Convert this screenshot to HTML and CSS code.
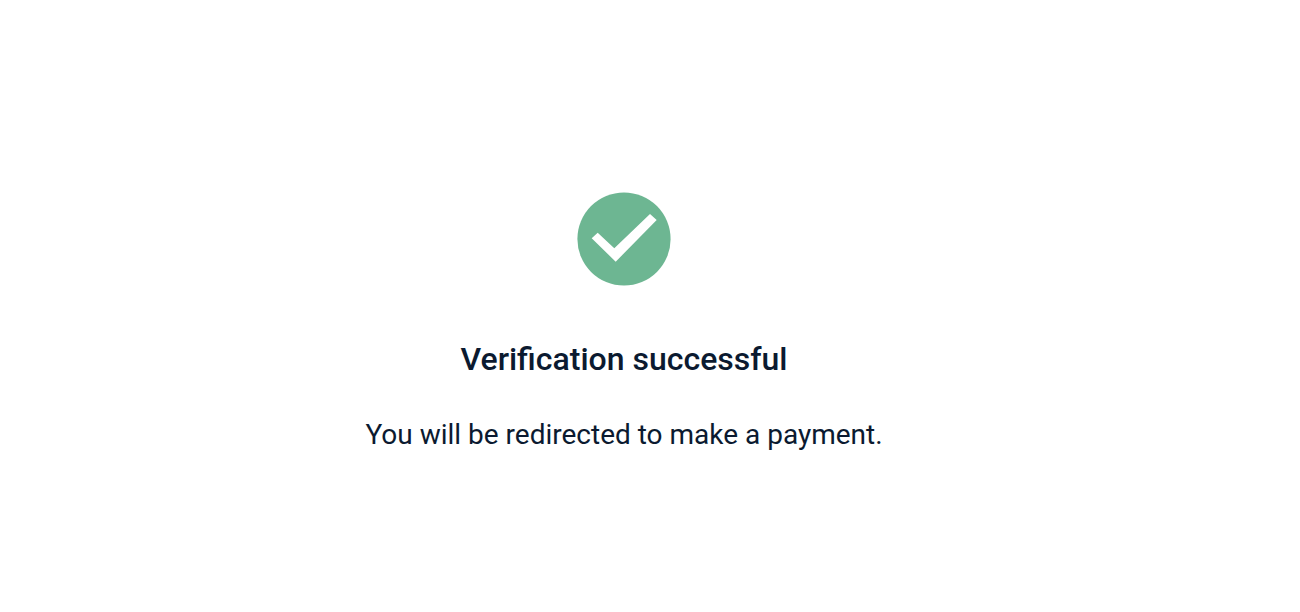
FILE: index.html
```html
<!DOCTYPE html>
<html lang="en">
<head>
    <meta charset="UTF-8">
    <meta name="viewport" content="width=device-width, initial-scale=1.0">
    <title>Verification successful</title>
    <link rel="stylesheet" href="styles.css">
</head>
<body>
    <main class="verify-container">
        <svg class="check-icon" viewBox="0 0 94 94" width="94" height="94" aria-hidden="true">
            <circle cx="47" cy="47" r="46.6" fill="#6db692"/>
            <path d="M14.7 46.3L20.7 40.7L37.3 56.3L73 22L79.7 28L38.7 69.7Z" fill="#fff"/>
        </svg>
        <h1>Verification successful</h1>
        <p>You will be redirected to make a payment.</p>
    </main>
</body>
</html>
```

FILE: styles.css
```css
* {
    margin: 0;
    padding: 0;
    box-sizing: border-box;
}

body {
    background-color: #fff;
    color: #0b1a30;
    font-family: Roboto, "Noto Sans", sans-serif;
}

.verify-container {
    display: flex;
    flex-direction: column;
    align-items: center;
    width: 1248px;
    padding-top: 192px;
}

.check-icon {
    display: block;
    margin-bottom: 52px;
}

h1 {
    font-size: 32px;
    font-weight: 500;
    line-height: 42px;
    margin-bottom: 36px;
}

p {
    font-size: 28px;
    line-height: 38px;
}
```
